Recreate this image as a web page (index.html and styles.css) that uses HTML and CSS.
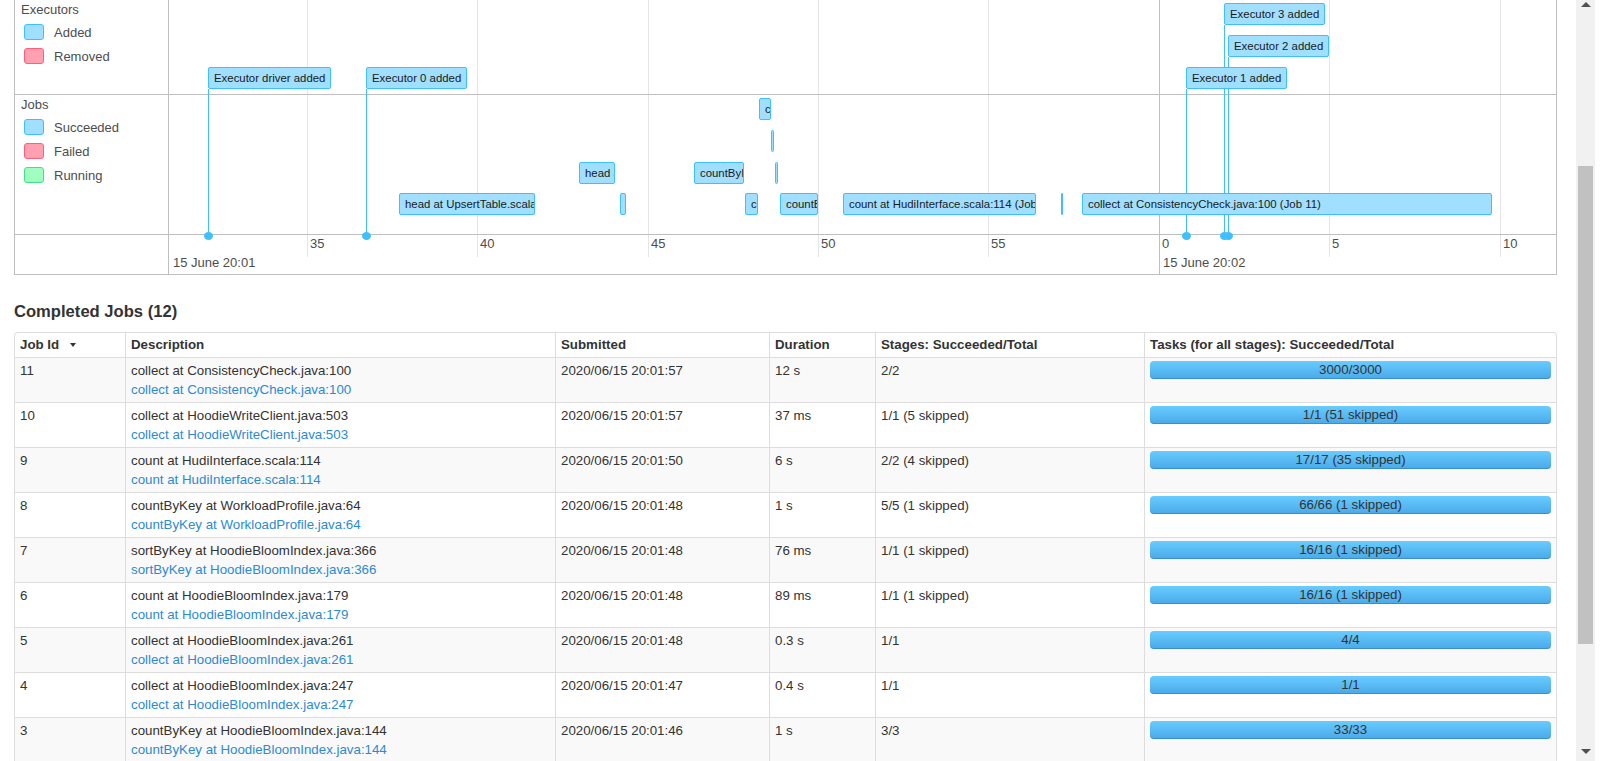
FILE: index.html
```html
<!DOCTYPE html>
<html lang="en">
<head>
<meta charset="utf-8">
<title>Spark Jobs</title>
<link rel="stylesheet" href="styles.css">
</head>
<body>
<div class="page">
  <div class="timeline">
    <div class="tl-label lbl-exec">
      <div class="grp-title">Executors</div>
      <div class="legend-item"><span class="swatch sw-blue"></span>Added</div>
      <div class="legend-item"><span class="swatch sw-red"></span>Removed</div>
    </div>
    <div class="tl-label lbl-jobs">
      <div class="grp-title">Jobs</div>
      <div class="legend-item"><span class="swatch sw-blue"></span>Succeeded</div>
      <div class="legend-item"><span class="swatch sw-red"></span>Failed</div>
      <div class="legend-item"><span class="swatch sw-green"></span>Running</div>
    </div>
    <div class="tl-label lbl-axis"></div>

    <div class="tl-grid">
      <div class="gl gl-minor" style="left:138px"></div>
      <div class="gl gl-minor" style="left:308px"></div>
      <div class="gl gl-minor" style="left:479px"></div>
      <div class="gl gl-minor" style="left:649px"></div>
      <div class="gl gl-minor" style="left:819px"></div>
      <div class="gl gl-major" style="left:990px"></div>
      <div class="gl gl-minor" style="left:1160px"></div>
      <div class="gl gl-minor" style="left:1331px"></div>
    </div>
    <div class="tl-row row-exec"></div>
    <div class="tl-row row-jobs"></div>
    <div class="tl-row row-axis"></div>

    <div class="tl-canvas">
      <!-- executor lines (behind items) -->
      <div class="ex-line" style="left:39px;top:89px;height:145px"></div>
      <div class="ex-line" style="left:197px;top:89px;height:145px"></div>
      <div class="ex-line" style="left:1017px;top:89px;height:145px"></div>
      <div class="ex-line" style="left:1055px;top:25px;height:209px"></div>
      <div class="ex-line" style="left:1059px;top:57px;height:177px"></div>

      <!-- executor boxes -->
      <div class="item ex-box" style="left:39px;top:67px">Executor driver added</div>
      <div class="item ex-box" style="left:197px;top:67px">Executor 0 added</div>
      <div class="item ex-box" style="left:1017px;top:67px">Executor 1 added</div>
      <div class="item ex-box" style="left:1059px;top:35px">Executor 2 added</div>
      <div class="item ex-box" style="left:1055px;top:3px">Executor 3 added</div>

      <!-- jobs -->
      <div class="item job" style="left:590px;top:98px;width:12px">collect at HoodieBloomIndex.java:261 (Job 5)</div>
      <div class="item job job-thin" style="left:602px;top:130px;width:3px"></div>
      <div class="item job" style="left:410px;top:162px;width:36px">head at UpsertTable.scala:40 (Job 1)</div>
      <div class="item job" style="left:525px;top:162px;width:50px">countByKey at HoodieBloomIndex.java:144 (Job 3)</div>
      <div class="item job job-thin" style="left:606px;top:162px;width:3px"></div>
      <div class="item job" style="left:230px;top:193px;width:136px">head at UpsertTable.scala:40 (Job 0)</div>
      <div class="item job job-thin" style="left:451px;top:193px;width:6px"></div>
      <div class="item job" style="left:576px;top:193px;width:13px">count at HoodieBloomIndex.java:179 (Job 7)</div>
      <div class="item job" style="left:611px;top:193px;width:38px">countByKey at WorkloadProfile.java:64 (Job 8)</div>
      <div class="item job" style="left:674px;top:193px;width:193px">count at HudiInterface.scala:114 (Job 9)</div>
      <div class="item job job-line" style="left:892px;top:193px;width:2px"></div>
      <div class="item job" style="left:913px;top:193px;width:410px">collect at ConsistencyCheck.java:100 (Job 11)</div>

      <!-- executor dots on axis -->
      <div class="ex-dot" style="left:35px"></div>
      <div class="ex-dot" style="left:193px"></div>
      <div class="ex-dot" style="left:1013px"></div>
      <div class="ex-dot" style="left:1051px"></div>
      <div class="ex-dot" style="left:1055px"></div>

      <!-- axis labels -->
      <div class="ax-minor" style="left:141px">35</div>
      <div class="ax-minor" style="left:311px">40</div>
      <div class="ax-minor" style="left:482px">45</div>
      <div class="ax-minor" style="left:652px">50</div>
      <div class="ax-minor" style="left:822px">55</div>
      <div class="ax-minor" style="left:993px">0</div>
      <div class="ax-minor" style="left:1163px">5</div>
      <div class="ax-minor" style="left:1334px">10</div>
      <div class="ax-major" style="left:4px">15 June 20:01</div>
      <div class="ax-major" style="left:994px">15 June 20:02</div>
    </div>
  </div>

  <h4 class="section-title">Completed Jobs (12)</h4>

  <table class="jobs-table">
    <colgroup>
      <col class="c-id"><col class="c-desc"><col class="c-sub"><col class="c-dur"><col class="c-stages"><col class="c-tasks">
    </colgroup>
    <thead>
      <tr>
        <th>Job Id<span class="sort-arrow"></span></th>
        <th>Description</th>
        <th>Submitted</th>
        <th>Duration</th>
        <th>Stages: Succeeded/Total</th>
        <th>Tasks (for all stages): Succeeded/Total</th>
      </tr>
    </thead>
    <tbody>
      <tr>
        <td>11</td>
        <td><div>collect at ConsistencyCheck.java:100</div><a class="desc-link">collect at ConsistencyCheck.java:100</a></td>
        <td>2020/06/15 20:01:57</td><td>12 s</td><td>2/2</td>
        <td><div class="progress"><span>3000/3000</span></div></td>
      </tr>
      <tr>
        <td>10</td>
        <td><div>collect at HoodieWriteClient.java:503</div><a class="desc-link">collect at HoodieWriteClient.java:503</a></td>
        <td>2020/06/15 20:01:57</td><td>37 ms</td><td>1/1 (5 skipped)</td>
        <td><div class="progress"><span>1/1 (51 skipped)</span></div></td>
      </tr>
      <tr>
        <td>9</td>
        <td><div>count at HudiInterface.scala:114</div><a class="desc-link">count at HudiInterface.scala:114</a></td>
        <td>2020/06/15 20:01:50</td><td>6 s</td><td>2/2 (4 skipped)</td>
        <td><div class="progress"><span>17/17 (35 skipped)</span></div></td>
      </tr>
      <tr>
        <td>8</td>
        <td><div>countByKey at WorkloadProfile.java:64</div><a class="desc-link">countByKey at WorkloadProfile.java:64</a></td>
        <td>2020/06/15 20:01:48</td><td>1 s</td><td>5/5 (1 skipped)</td>
        <td><div class="progress"><span>66/66 (1 skipped)</span></div></td>
      </tr>
      <tr>
        <td>7</td>
        <td><div>sortByKey at HoodieBloomIndex.java:366</div><a class="desc-link">sortByKey at HoodieBloomIndex.java:366</a></td>
        <td>2020/06/15 20:01:48</td><td>76 ms</td><td>1/1 (1 skipped)</td>
        <td><div class="progress"><span>16/16 (1 skipped)</span></div></td>
      </tr>
      <tr>
        <td>6</td>
        <td><div>count at HoodieBloomIndex.java:179</div><a class="desc-link">count at HoodieBloomIndex.java:179</a></td>
        <td>2020/06/15 20:01:48</td><td>89 ms</td><td>1/1 (1 skipped)</td>
        <td><div class="progress"><span>16/16 (1 skipped)</span></div></td>
      </tr>
      <tr>
        <td>5</td>
        <td><div>collect at HoodieBloomIndex.java:261</div><a class="desc-link">collect at HoodieBloomIndex.java:261</a></td>
        <td>2020/06/15 20:01:48</td><td>0.3 s</td><td>1/1</td>
        <td><div class="progress"><span>4/4</span></div></td>
      </tr>
      <tr>
        <td>4</td>
        <td><div>collect at HoodieBloomIndex.java:247</div><a class="desc-link">collect at HoodieBloomIndex.java:247</a></td>
        <td>2020/06/15 20:01:47</td><td>0.4 s</td><td>1/1</td>
        <td><div class="progress"><span>1/1</span></div></td>
      </tr>
      <tr>
        <td>3</td>
        <td><div>countByKey at HoodieBloomIndex.java:144</div><a class="desc-link">countByKey at HoodieBloomIndex.java:144</a></td>
        <td>2020/06/15 20:01:46</td><td>1 s</td><td>3/3</td>
        <td><div class="progress"><span>33/33</span></div></td>
      </tr>
    </tbody>
  </table>
</div>

<div class="scrollbar">
  <span class="sb-arrow sb-up"></span>
  <div class="sb-thumb"></div>
  <span class="sb-arrow sb-down"></span>
</div>
</body>
</html>
```

FILE: styles.css
```css
* { box-sizing: border-box; }

html { overflow: hidden; }

body {
  margin: 0;
  background: #fff;
  color: #333;
  font-family: "Liberation Sans", Arial, Helvetica, sans-serif;
}

.page {
  padding-left: 14px;
  width: 1570px;
}

/* ---------- timeline ---------- */
.timeline {
  display: grid;
  grid-template-columns: 154px 1387px;
  grid-template-rows: 95px 140px 39px;
  width: 1543px;
  border: 1px solid #bfbfbf;
  border-top: 0;
  color: #4d4d4d;
  font-size: 13px;
}

.tl-label {
  grid-column: 1;
  border-right: 1px solid #bfbfbf;
  padding-left: 6px;
}
.lbl-exec { grid-row: 1; border-bottom: 1px solid #bfbfbf; padding-top: 2px; }
.lbl-jobs { grid-row: 2; border-bottom: 1px solid #bfbfbf; padding-top: 2px; }
.lbl-axis { grid-row: 3; }

.grp-title {
  line-height: 16px;
  margin-bottom: 2px;
}

.legend-item {
  display: flex;
  align-items: center;
  height: 24px;
}

.swatch {
  width: 20px;
  height: 16px;
  margin-left: 3px;
  margin-right: 10px;
  border: 1px solid;
  border-radius: 3px;
}
.sw-blue { background: #a0dfff; border-color: #3ec0ff; }
.sw-red { background: #ffa1b0; border-color: #ff5f7a; }
.sw-green { background: #a0ffc0; border-color: #44e088; }

.tl-grid {
  grid-column: 2;
  grid-row: 1 / 4;
  position: relative;
}
.gl {
  position: absolute;
  top: 0;
  width: 1px;
}
.gl-minor { height: 257px; background: #e5e5e5; }
.gl-major { height: 274px; background: #bfbfbf; }

.tl-row { grid-column: 2; position: relative; }
.row-exec { grid-row: 1; border-bottom: 1px solid #bfbfbf; }
.row-jobs { grid-row: 2; border-bottom: 1px solid #bfbfbf; }
.row-axis { grid-row: 3; }

.tl-canvas {
  grid-column: 2;
  grid-row: 1 / 4;
  position: relative;
  overflow: hidden;
}

.ex-line {
  position: absolute;
  width: 1px;
  background: #3ec0ff;
}

.item {
  position: absolute;
  height: 22px;
  padding: 0 5px;
  background: #a0dfff;
  border: 1px solid #3ec0ff;
  border-radius: 2px;
  color: #1a1a1a;
  font-size: 11.4px;
  line-height: 20px;
  white-space: nowrap;
  overflow: hidden;
}
.job-thin { padding: 0; }
.job-line { padding: 0; background: #3ec0ff; }

.ex-dot {
  position: absolute;
  top: 232px;
  width: 9px;
  height: 8px;
  border-radius: 50%;
  background: #3ec0ff;
}

.ax-minor, .ax-major {
  position: absolute;
  line-height: 16px;
  font-size: 13px;
  color: #4d4d4d;
  white-space: nowrap;
}
.ax-minor { top: 236px; }
.ax-major { top: 255px; }

/* ---------- heading ---------- */
.section-title {
  margin: 27px 0 10px;
  font-size: 16.6px;
  line-height: 20px;
  font-weight: bold;
  color: #333;
}

/* ---------- table ---------- */
.jobs-table {
  width: 1542px;
  table-layout: fixed;
  border-collapse: separate;
  border-spacing: 0;
  border: 1px solid #ddd;
  border-left: 0;
  border-radius: 4px;
  font-size: 13.3px;
  line-height: 19px;
  color: #333;
}
.c-id { width: 111px; }
.c-desc { width: 430px; }
.c-sub { width: 214px; }
.c-dur { width: 106px; }
.c-stages { width: 269px; }
.c-tasks { width: 412px; }

.jobs-table th,
.jobs-table td {
  border-left: 1px solid #ddd;
  text-align: left;
  vertical-align: top;
}
.jobs-table th {
  padding: 2px 5px 3px;
  font-weight: bold;
}
.jobs-table th:first-child { border-top-left-radius: 4px; }
.jobs-table td {
  padding: 3px 5px;
  border-top: 1px solid #ddd;
}
.jobs-table tbody tr:nth-child(odd) td { background: #f9f9f9; }

.sort-arrow {
  display: inline-block;
  margin-left: 11px;
  vertical-align: middle;
  border-top: 4px solid #333;
  border-left: 3px solid transparent;
  border-right: 3px solid transparent;
}

.desc-link {
  display: block;
  color: #2b8ad6;
  text-decoration: none;
}

.progress {
  height: 18px;
  border-radius: 4px;
  background: linear-gradient(to bottom, #68ccff, #4aa9e8);
  box-shadow: inset 0 -1px 0 rgba(0, 60, 130, 0.25);
  text-align: center;
  line-height: 18px;
  color: #333;
}

/* ---------- fake scrollbar (overlay) ---------- */
.scrollbar {
  position: fixed;
  top: 0;
  left: 1576px;
  width: 19px;
  height: 761px;
  background: #f1f1f1;
}
.sb-thumb {
  position: absolute;
  top: 166px;
  left: 2px;
  width: 15px;
  height: 478px;
  background: #c1c1c1;
}
.sb-arrow {
  position: absolute;
  left: 5px;
  width: 0;
  height: 0;
  border-left: 5px solid transparent;
  border-right: 5px solid transparent;
}
.sb-up { top: 2px; border-bottom: 5px solid #505050; }
.sb-down { top: 749px; border-top: 5px solid #505050; }
```
